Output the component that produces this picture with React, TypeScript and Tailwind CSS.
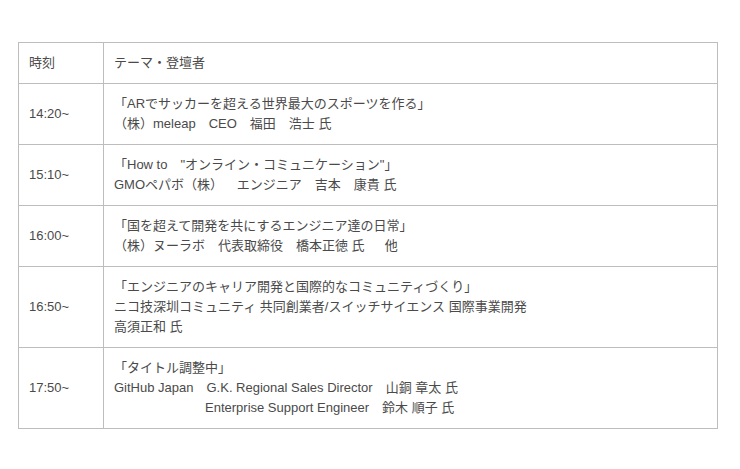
const rows: { time: string; lines: React.ReactNode[] }[] = [
  {
    time: '14:20~',
    lines: ['「ARでサッカーを超える世界最大のスポーツを作る」', '（株）meleap　CEO　福田　浩士 氏'],
  },
  {
    time: '15:10~',
    lines: ['「How to　"オンライン・コミュニケーション"」', 'GMOペパボ（株）　  エンジニア　吉本　康貴 氏'],
  },
  {
    time: '16:00~',
    lines: ['「国を超えて開発を共にするエンジニア達の日常」', '（株）ヌーラボ　代表取締役　橋本正徳 氏　  他'],
  },
  {
    time: '16:50~',
    lines: [
      '「エンジニアのキャリア開発と国際的なコミュニティづくり」',
      'ニコ技深圳コミュニティ 共同創業者/スイッチサイエンス 国際事業開発',
      '高須正和 氏',
    ],
  },
  {
    time: '17:50~',
    lines: [
      '「タイトル調整中」',
      'GitHub Japan　G.K. Regional Sales Director　山銅 章太 氏',
      <span className="pl-[91px]">Enterprise Support Engineer　鈴木 順子 氏</span>,
    ],
  },
];

export default function App() {
  return (
    <div
      className="bg-white w-[740px] h-[469px] pt-[42px] pl-[18px] text-[13px] leading-[20px] text-[#4a4a4a]"
      style={{ fontFamily: '"Liberation Sans", "Noto Sans CJK JP", sans-serif' }}
    >
      <table className="w-[700px] border-collapse border border-[#bdbdbd]">
        <tbody>
          <tr>
            <td className="w-[85px] border border-[#bdbdbd] px-[10px] py-[10px] align-middle">時刻</td>
            <td className="border border-[#bdbdbd] px-[10px] py-[10px] align-middle">テーマ・登壇者</td>
          </tr>
          {rows.map((row) => (
            <tr key={row.time}>
              <td className="border border-[#bdbdbd] px-[10px] py-[10px] align-middle">{row.time}</td>
              <td className="border border-[#bdbdbd] px-[10px] py-[10px] align-middle">
                {row.lines.map((line, i) => (
                  <div key={i} className="whitespace-pre">
                    {line}
                  </div>
                ))}
              </td>
            </tr>
          ))}
        </tbody>
      </table>
    </div>
  );
}
